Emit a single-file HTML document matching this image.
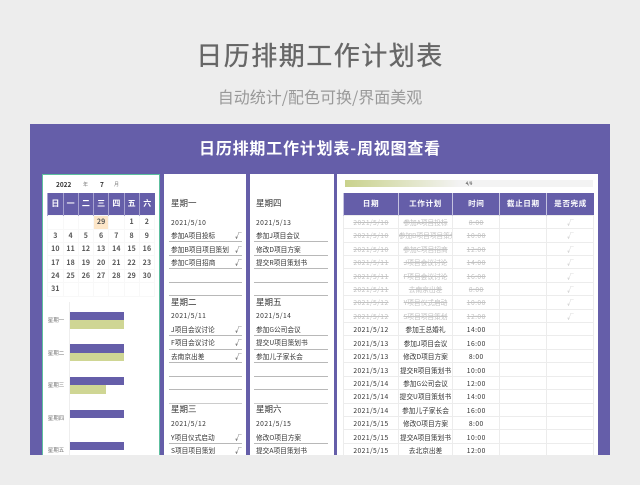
<!DOCTYPE html>
<html lang="zh"><head><meta charset="utf-8"><style>
html,body{margin:0;padding:0}
body{width:640px;height:485px;background:#ededed;overflow:hidden;position:relative;font-family:"Noto Sans CJK SC","Liberation Sans",sans-serif}
div{position:absolute}
.c{text-align:center;white-space:nowrap}
#t1{left:0;width:640px;top:36px;line-height:38px;font-size:26px;letter-spacing:1.5px;color:#666;-webkit-text-stroke:.35px #666}
#t2{left:0;width:640px;top:84px;line-height:24px;font-size:16px;color:#999}
#panel{left:30px;top:124px;width:580px;height:331px;background:#655ea9;overflow:hidden}
#t3{left:0;width:580px;top:10.5px;line-height:24px;font-size:16px;font-weight:bold;letter-spacing:.8px;color:#fff}
.w{background:#fff;top:50px;height:290px}
table{position:absolute;border-collapse:collapse;table-layout:fixed}
td,th{padding:0;text-align:center;overflow:hidden;white-space:nowrap;line-height:10px}
#cal th{height:22.4px;background:#655ea9;color:#fff;font-size:8px;border-left:1px solid #a6a2cf}
#cal td{height:13.43px;font-size:7px;font-weight:bold;color:#555;border:1px solid #f8f8f8;box-sizing:border-box;letter-spacing:.2px}
#tb th{height:22px;background:#655ea9;color:#fff;font-size:7.6px;font-weight:bold;letter-spacing:.6px;border-left:1px solid #c5c3e0}
#tb td{height:13.43px;box-sizing:border-box;font-size:6.7px;color:#333;border:1px solid #ececec}
#tb td.m{letter-spacing:.45px}
#tb tr.d td{color:#c2c2c2;text-decoration:line-through}
#tb tr.d td.n{text-decoration:none}
.h{font-size:8.5px;color:#333;line-height:12px;white-space:nowrap}
.s{font-size:6.7px;color:#333;line-height:10px;white-space:nowrap}
.a{letter-spacing:.45px}
.l{height:1px;background:#b8b8b8}
.p{background:#655ea9;left:39.7px;height:8.4px}
.g{background:#cfd694;left:39.7px;height:8.6px}
.k{left:14px;width:24px;font-size:5.5px;color:#777;line-height:8px;text-align:center;white-space:nowrap}
</style></head><body>
<div id="t1" class="c">日历排期工作计划表</div>
<div id="t2" class="c">自动统计/配色可换/界面美观</div>
<div id="panel">
<div id="t3" class="c">日历排期工作计划表-周视图查看</div>

<div class="w" style="left:11.7px;width:118px;box-sizing:border-box;border:1px solid #5dbf9f;border-bottom:0"></div>
<div class="s" style="left:26px;top:54.5px;font-size:6.5px;font-weight:bold">2022</div>
<div class="s" style="left:53px;top:56px;font-size:5px;color:#777">年</div>
<div class="s" style="left:70px;top:54.5px;font-size:6.5px;font-weight:bold">7</div>
<div class="s" style="left:84px;top:56px;font-size:5px;color:#777">月</div>
<table id="cal" style="left:17.3px;top:68.7px;width:107.8px">
<tr><th>日</th><th>一</th><th>二</th><th>三</th><th>四</th><th>五</th><th>六</th></tr>
<tr><td></td><td></td><td></td><td style="background:#fde6c8">29</td><td></td><td>1</td><td>2</td></tr>
<tr><td>3</td><td>4</td><td>5</td><td>6</td><td>7</td><td>8</td><td>9</td></tr>
<tr><td>10</td><td>11</td><td>12</td><td>13</td><td>14</td><td>15</td><td>16</td></tr>
<tr><td>17</td><td>18</td><td>19</td><td>20</td><td>21</td><td>22</td><td>23</td></tr>
<tr><td>24</td><td>25</td><td>26</td><td>27</td><td>28</td><td>29</td><td>30</td></tr>
<tr><td>31</td><td></td><td></td><td></td><td></td><td></td><td></td></tr>
</table>
<div style="left:39.3px;top:178px;width:1px;height:153px;background:#eee"></div>
<div class="p" style="top:187.7px;width:54.6px"></div><div class="g" style="top:196px;width:54.6px"></div>
<div class="p" style="top:220.3px;width:54.6px"></div><div class="g" style="top:228.7px;width:54.6px"></div>
<div class="p" style="top:253px;width:54.6px"></div><div class="g" style="top:261.3px;width:36.3px"></div>
<div class="p" style="top:285.5px;width:54.6px"></div>
<div class="p" style="top:318px;width:54.6px"></div>
<div class="k" style="top:192px">星期一</div>
<div class="k" style="top:225px">星期二</div>
<div class="k" style="top:257px">星期三</div>
<div class="k" style="top:290px">星期四</div>
<div class="k" style="top:322px">星期五</div>

<div class="w" style="left:134px;width:82px"></div>
<div class="w" style="left:220px;width:84px"></div>
<div class="w" style="left:307.3px;width:260.7px"></div>

<div class="h" style="left:141px;top:73px">星期一</div>
<div class="s a" style="left:141px;top:93px">2021/5/10</div>
<div class="s" style="left:141px;top:106px">参加A项目投标</div><div class="s" style="left:205px;top:106px">√</div>
<div class="l" style="left:139px;width:73px;top:117px"></div>
<div class="s" style="left:141px;top:119.5px">参加B项目项目策划</div><div class="s" style="left:205px;top:119.5px">√</div>
<div class="l" style="left:139px;width:73px;top:130.5px"></div>
<div class="s" style="left:141px;top:133px">参加C项目招商</div><div class="s" style="left:205px;top:133px">√</div>
<div class="l" style="left:139px;width:73px;top:144px"></div>
<div class="l" style="left:139px;width:73px;top:158px"></div>
<div class="l" style="left:139px;width:73px;top:171px"></div>

<div class="h" style="left:141px;top:172px">星期二</div>
<div class="s a" style="left:141px;top:186px">2021/5/11</div>
<div class="s" style="left:141px;top:200px">J项目会议讨论</div><div class="s" style="left:205px;top:200px">√</div>
<div class="l" style="left:139px;width:73px;top:211px"></div>
<div class="s" style="left:141px;top:213px">F项目会议讨论</div><div class="s" style="left:205px;top:213px">√</div>
<div class="l" style="left:139px;width:73px;top:225px"></div>
<div class="s" style="left:141px;top:227px">去南京出差</div><div class="s" style="left:205px;top:227px">√</div>
<div class="l" style="left:139px;width:73px;top:238px"></div>
<div class="l" style="left:139px;width:73px;top:252px"></div>
<div class="l" style="left:139px;width:73px;top:265px"></div>
<div class="l" style="left:139px;width:73px;top:279px;background:#ccc"></div>

<div class="h" style="left:141px;top:279px">星期三</div>
<div class="s a" style="left:141px;top:294px">2021/5/12</div>
<div class="s" style="left:141px;top:308px">Y项目仪式启动</div><div class="s" style="left:205px;top:308px">√</div>
<div class="l" style="left:139px;width:73px;top:319px"></div>
<div class="s" style="left:141px;top:321px">S项目项目策划</div><div class="s" style="left:205px;top:321px">√</div>

<div class="h" style="left:226px;top:73px">星期四</div>
<div class="s a" style="left:226px;top:93px">2021/5/13</div>
<div class="s" style="left:226px;top:106px">参加J项目会议</div>
<div class="l" style="left:224px;width:74px;top:117px"></div>
<div class="s" style="left:226px;top:119.5px">修改D项目方案</div>
<div class="l" style="left:224px;width:74px;top:130.5px"></div>
<div class="s" style="left:226px;top:133px">提交R项目策划书</div>
<div class="l" style="left:224px;width:74px;top:144px"></div>
<div class="l" style="left:224px;width:74px;top:158px"></div>
<div class="l" style="left:224px;width:74px;top:171px"></div>

<div class="h" style="left:226px;top:172px">星期五</div>
<div class="s a" style="left:226px;top:186px">2021/5/14</div>
<div class="s" style="left:226px;top:200px">参加G公司会议</div>
<div class="l" style="left:224px;width:74px;top:211px"></div>
<div class="s" style="left:226px;top:213px">提交U项目策划书</div>
<div class="l" style="left:224px;width:74px;top:225px"></div>
<div class="s" style="left:226px;top:227px">参加儿子家长会</div>
<div class="l" style="left:224px;width:74px;top:238px"></div>
<div class="l" style="left:224px;width:74px;top:252px"></div>
<div class="l" style="left:224px;width:74px;top:265px"></div>
<div class="l" style="left:224px;width:74px;top:279px;background:#ccc"></div>

<div class="h" style="left:226px;top:279px">星期六</div>
<div class="s a" style="left:226px;top:294px">2021/5/15</div>
<div class="s" style="left:226px;top:308px">修改O项目方案</div>
<div class="l" style="left:224px;width:74px;top:319px"></div>
<div class="s" style="left:226px;top:321px">提交A项目策划书</div>

<div style="left:315px;top:56px;width:248px;height:7.3px;background:linear-gradient(90deg,#c9d28c 0,#f3f3f3 46%,#f3f3f3 100%)"></div>
<div class="c" style="left:429px;width:20px;top:56.5px;line-height:7px;font-size:4.5px;color:#333">4/9</div>

<table id="tb" style="left:313.3px;top:68.7px;width:250px">
<colgroup><col style="width:54.4px"><col style="width:54.6px"><col style="width:47px"><col style="width:47px"><col style="width:47px"></colgroup>
<tr><th>日期</th><th>工作计划</th><th>时间</th><th>截止日期</th><th>是否完成</th></tr>
<tr class="d"><td class="m">2021/5/10</td><td>参加A项目投标</td><td class="m">8:00</td><td></td><td class="n">√</td></tr>
<tr class="d"><td class="m">2021/5/10</td><td>参加B项目项目策划</td><td class="m">10:00</td><td></td><td class="n">√</td></tr>
<tr class="d"><td class="m">2021/5/10</td><td>参加C项目招商</td><td class="m">12:00</td><td></td><td class="n">√</td></tr>
<tr class="d"><td class="m">2021/5/11</td><td>J项目会议讨论</td><td class="m">14:00</td><td></td><td class="n">√</td></tr>
<tr class="d"><td class="m">2021/5/11</td><td>F项目会议讨论</td><td class="m">16:00</td><td></td><td class="n">√</td></tr>
<tr class="d"><td class="m">2021/5/11</td><td>去南京出差</td><td class="m">8:00</td><td></td><td class="n">√</td></tr>
<tr class="d"><td class="m">2021/5/12</td><td>Y项目仪式启动</td><td class="m">10:00</td><td></td><td class="n">√</td></tr>
<tr class="d"><td class="m">2021/5/12</td><td>S项目项目策划</td><td class="m">12:00</td><td></td><td class="n">√</td></tr>
<tr><td class="m">2021/5/12</td><td>参加王总婚礼</td><td class="m">14:00</td><td></td><td></td></tr>
<tr><td class="m">2021/5/13</td><td>参加J项目会议</td><td class="m">16:00</td><td></td><td></td></tr>
<tr><td class="m">2021/5/13</td><td>修改D项目方案</td><td class="m">8:00</td><td></td><td></td></tr>
<tr><td class="m">2021/5/13</td><td>提交R项目策划书</td><td class="m">10:00</td><td></td><td></td></tr>
<tr><td class="m">2021/5/14</td><td>参加G公司会议</td><td class="m">12:00</td><td></td><td></td></tr>
<tr><td class="m">2021/5/14</td><td>提交U项目策划书</td><td class="m">14:00</td><td></td><td></td></tr>
<tr><td class="m">2021/5/14</td><td>参加儿子家长会</td><td class="m">16:00</td><td></td><td></td></tr>
<tr><td class="m">2021/5/15</td><td>修改O项目方案</td><td class="m">8:00</td><td></td><td></td></tr>
<tr><td class="m">2021/5/15</td><td>提交A项目策划书</td><td class="m">10:00</td><td></td><td></td></tr>
<tr><td class="m">2021/5/15</td><td>去北京出差</td><td class="m">12:00</td><td></td><td></td></tr>
</table>
</div>
</body></html>
